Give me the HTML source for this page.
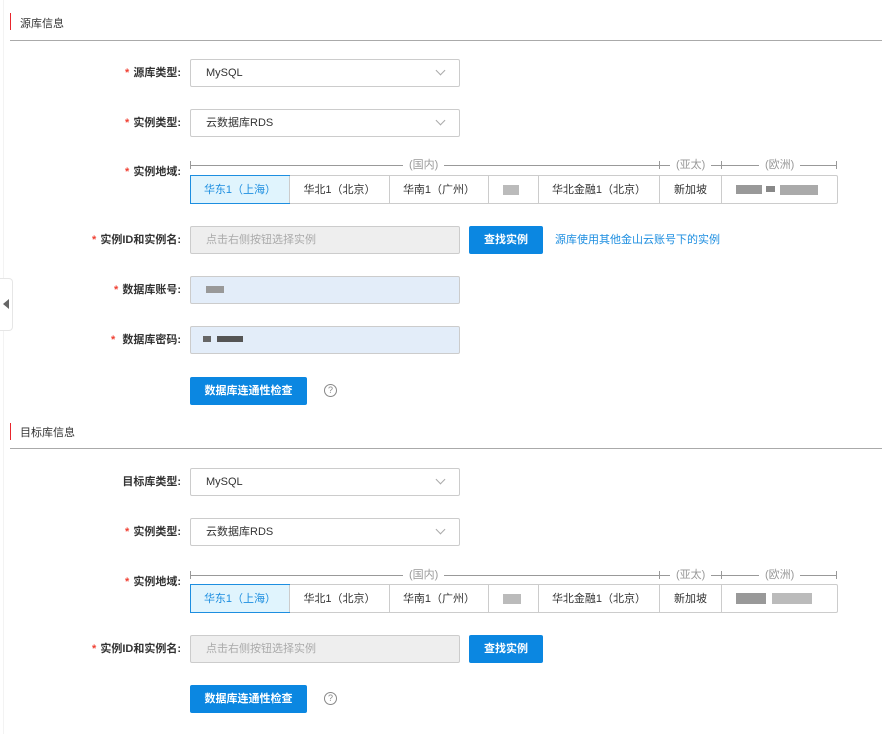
<!DOCTYPE html>
<html><head><meta charset="utf-8"><style>
*{box-sizing:border-box;margin:0;padding:0}
body{width:882px;height:734px;background:#fff;font-family:"Liberation Sans","Noto Sans CJK SC",sans-serif;font-size:11px;color:#333;position:relative;overflow:hidden}
.a{position:absolute}
.bar{width:1px;height:17px;background:#e8262d}
.hd{font-size:11px;color:#333}
.div{height:1px;background:#aaa;left:10px;width:872px}
.lbl{right:701px;text-align:right;white-space:nowrap;font-weight:bold;color:#333;line-height:28px;height:28px}
.lbl i{color:#f04134;font-style:normal;margin-right:4px}
.inp{left:190px;width:270px;height:28px;border:1px solid #ccc;border-radius:2px;line-height:27px;padding-left:15px;background:#fff}
.inp.dis{background:#eee;color:#aaa}
.inp.fill{background:#e3edf9}
.chev{position:absolute;right:15px;top:7px;width:7px;height:7px;border-right:1px solid #aaa;border-bottom:1px solid #aaa;transform:rotate(45deg)}
.btn{background:#0b87e1;color:#fff;border-radius:2px;text-align:center;line-height:28px;height:28px;font-weight:bold}
.cells{left:190px;width:648px;height:29px;border:1px solid #ccc;border-radius:2px;display:flex}
.cells div{border-left:1px solid #ccc;text-align:center;line-height:29px;white-space:nowrap;position:relative}
.cells div:first-child{border-left:none}
.cells .on{background:#e0f4fd;color:#1d8ee0;outline:1px solid #1d8ee0}
.rl{height:1px;background:#999}
.tk{width:1px;height:8px;background:#999}
.rt{color:#999;background:#fff;padding:0 6px;line-height:12px}
.q{width:13px;height:13px;border:1px solid #888;border-radius:50%;font-size:9px;color:#888;text-align:center;line-height:11px}
.blk{position:absolute;background:#aaa}
</style></head><body>
<div class="a" style="left:3px;top:0;width:1px;height:734px;background:#f3f3f3"></div>
<div class="a" style="left:0;top:278px;width:13px;height:53px;border:1px solid #e6e6e6;border-left:none;border-radius:0 4px 4px 0;background:#fff"></div>
<div class="a" style="left:3px;top:299px;width:0;height:0;border-top:5px solid transparent;border-bottom:5px solid transparent;border-right:6px solid #666"></div>

<div class="a bar" style="left:10px;top:13px"></div>
<div class="a hd" style="left:20px;top:15px">源库信息</div>
<div class="a div" style="top:40px"></div>

<div class="a lbl" style="top:59px"><i>*</i>源库类型:</div>
<div class="a inp" style="top:59px">MySQL<span class="chev"></span></div>
<div class="a lbl" style="top:109px"><i>*</i>实例类型:</div>
<div class="a inp" style="top:109px">云数据库RDS<span class="chev"></span></div>
<div class="a lbl" style="top:158px"><i>*</i>实例地域:</div>

<div class="a rl" style="left:190px;top:165px;width:647px"></div>
<div class="a tk" style="left:190px;top:161px"></div>
<div class="a tk" style="left:659px;top:161px"></div>
<div class="a tk" style="left:721px;top:161px"></div>
<div class="a tk" style="left:836px;top:161px"></div>
<div class="a rt" style="left:403px;top:159px">(国内)</div>
<div class="a rt" style="left:670px;top:159px">(亚太)</div>
<div class="a rt" style="left:759px;top:159px">(欧洲)</div>
<div class="a cells" style="top:175px">
<div class="on" style="width:98px">华东1（上海）</div>
<div style="width:100px">华北1（北京）</div>
<div style="width:99px">华南1（广州）</div>
<div style="width:50px"><span class="blk" style="left:14px;top:9px;width:16px;height:10px;background:#bbb"></span></div>
<div style="width:121px">华北金融1（北京）</div>
<div style="width:62px">新加坡</div>
<div style="flex:1"><span class="blk" style="left:14px;top:9px;width:26px;height:9px;background:#999"></span><span class="blk" style="left:44px;top:10px;width:9px;height:6px;background:#888"></span><span class="blk" style="left:58px;top:9px;width:38px;height:10px;background:#aaa"></span></div>
</div>

<div class="a lbl" style="top:226px"><i>*</i>实例ID和实例名:</div>
<div class="a inp dis" style="top:226px">点击右侧按钮选择实例</div>
<div class="a btn" style="left:469px;top:226px;width:74px">查找实例</div>
<div class="a" style="left:555px;top:226px;line-height:28px;color:#1d8ee0">源库使用其他金山云账号下的实例</div>

<div class="a lbl" style="top:276px"><i>*</i>数据库账号:</div>
<div class="a inp fill" style="top:276px"><span class="blk" style="left:15px;top:9px;width:18px;height:7px;background:#999"></span></div>
<div class="a lbl" style="top:326px"><i>*</i>&nbsp;数据库密码:</div>
<div class="a inp fill" style="top:326px"><span class="blk" style="left:12px;top:9px;width:8px;height:6px;background:#666"></span><span class="blk" style="left:26px;top:9px;width:26px;height:6px;background:#555"></span></div>

<div class="a btn" style="left:190px;top:377px;width:117px">数据库连通性检查</div>
<div class="a q" style="left:324px;top:384px">?</div>

<div class="a bar" style="left:10px;top:423px"></div>
<div class="a hd" style="left:20px;top:424px">目标库信息</div>
<div class="a div" style="top:448px"></div>

<div class="a lbl" style="top:468px">目标库类型:</div>
<div class="a inp" style="top:468px">MySQL<span class="chev"></span></div>
<div class="a lbl" style="top:518px"><i>*</i>实例类型:</div>
<div class="a inp" style="top:518px">云数据库RDS<span class="chev"></span></div>
<div class="a lbl" style="top:568px"><i>*</i>实例地域:</div>

<div class="a rl" style="left:190px;top:575px;width:647px"></div>
<div class="a tk" style="left:190px;top:571px"></div>
<div class="a tk" style="left:659px;top:571px"></div>
<div class="a tk" style="left:721px;top:571px"></div>
<div class="a tk" style="left:836px;top:571px"></div>
<div class="a rt" style="left:403px;top:569px">(国内)</div>
<div class="a rt" style="left:670px;top:569px">(亚太)</div>
<div class="a rt" style="left:759px;top:569px">(欧洲)</div>
<div class="a cells" style="top:584px">
<div class="on" style="width:98px">华东1（上海）</div>
<div style="width:100px">华北1（北京）</div>
<div style="width:99px">华南1（广州）</div>
<div style="width:50px"><span class="blk" style="left:14px;top:9px;width:18px;height:10px;background:#bbb"></span></div>
<div style="width:121px">华北金融1（北京）</div>
<div style="width:62px">新加坡</div>
<div style="flex:1"><span class="blk" style="left:14px;top:8px;width:30px;height:11px;background:#999"></span><span class="blk" style="left:50px;top:8px;width:40px;height:11px;background:#bbb"></span></div>
</div>

<div class="a lbl" style="top:635px"><i>*</i>实例ID和实例名:</div>
<div class="a inp dis" style="top:635px">点击右侧按钮选择实例</div>
<div class="a btn" style="left:469px;top:635px;width:74px">查找实例</div>

<div class="a btn" style="left:190px;top:685px;width:117px">数据库连通性检查</div>
<div class="a q" style="left:324px;top:692px">?</div>
</body></html>
